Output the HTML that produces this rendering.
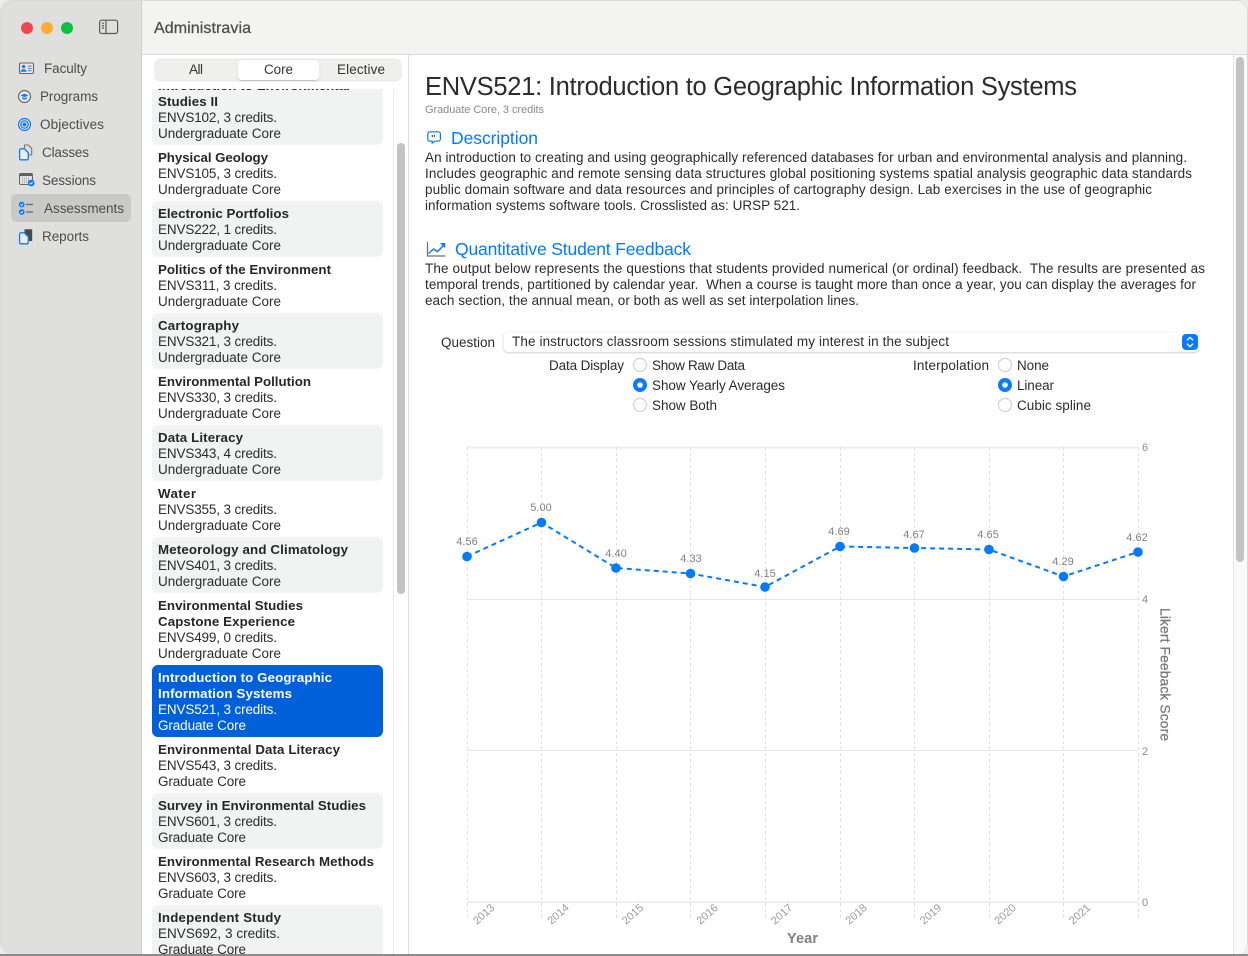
<!DOCTYPE html>
<html lang="en"><head><meta charset="utf-8"><title>Administravia</title>
<style>
html,body{margin:0;padding:0;width:1248px;height:956px;overflow:hidden;background:#ececec}
svg{display:block}
text{font-family:"Liberation Sans",sans-serif;font-size:13.5px;fill:#2c2c2c;white-space:pre}
.b{font-weight:bold;fill:#262626;font-size:13.3px}
.w{fill:#fff}
.n{fill:#4d4d4d}
.l{font-size:11px;fill:#8a8a8a}
.p{font-size:11px;fill:#808080}
.y{font-size:11px;fill:#999}
.h{font-size:17.5px;fill:#007aff}
.seg{fill:#333}
</style></head><body>
<svg width="1248" height="956" viewBox="0 0 1248 956" xmlns="http://www.w3.org/2000/svg">
<defs>
<clipPath id="win"><rect x="1" y="1" width="1246" height="953" rx="10"/></clipPath>
<clipPath id="list"><rect x="142" y="89" width="251" height="865"/></clipPath>
<filter id="sh" x="-5%" y="-30%" width="110%" height="170%"><feDropShadow dx="0" dy="0.6" stdDeviation="0.7" flood-color="#000" flood-opacity=".3"/></filter>
</defs>

<rect x="0" y="954" width="1248" height="2" fill="#8b8b8b"/>
<rect x="0.5" y="0.5" width="1247" height="953.5" rx="10.5" fill="#c4c4c4"/>
<g clip-path="url(#win)">
<rect x="1" y="1" width="1246" height="953" fill="#fff"/>
<rect x="1" y="1" width="140" height="953" fill="#dfdfde"/>
<rect x="141" y="1" width="1" height="953" fill="#cfcfcf"/>
<rect x="142" y="1" width="1105" height="53" fill="#f3f3f2"/>
<rect x="142" y="54" width="1105" height="1" fill="#d9d9d9"/>

<!-- Toolbar -->
<circle cx="27" cy="28" r="6" fill="#f4474d"/>
<circle cx="47" cy="28" r="6" fill="#fdab35"/>
<circle cx="67" cy="28" r="6" fill="#0cc040"/>
<g fill="none" stroke="#5a5a5a" stroke-width="1.2">
<rect x="99.6" y="20.2" width="18" height="13.3" rx="2.2"/>
<path d="M106 20.2v13.3"/>
<path d="M101.8 23.2h2.2M101.8 25.6h2.2M101.8 28h2.2"/>
</g>
<text x="154" y="33" textLength="97" class="n" style="font-size:16px;stroke:#4d4d4d;stroke-width:.25">Administravia</text>

<!-- Sidebar -->
<rect x="11" y="194" width="120" height="28" rx="5" fill="#c9c9c8"/>
<text x="44" y="73" textLength="43" class="n">Faculty</text>
<text x="40" y="101" textLength="58" class="n">Programs</text>
<text x="40" y="129" textLength="64" class="n">Objectives</text>
<text x="42" y="157" textLength="47" class="n">Classes</text>
<text x="42" y="185" textLength="54" class="n">Sessions</text>
<text x="44" y="213" textLength="80" class="n">Assessments</text>
<text x="42" y="241" textLength="47" class="n">Reports</text>

<!-- Faculty icon -->
<rect x="19.5" y="63" width="14" height="10.5" rx="1.5" fill="#e9e9e9" stroke="#666" stroke-width="1.1"/>
<circle cx="23.6" cy="66.6" r="1.7" fill="#0a7aff"/>
<path d="M20.6 71.8c0-3.4 6-3.4 6 0z" fill="#0a7aff"/>
<path d="M27.8 66h3.8M27.8 68.4h3.8M27.8 70.8h3.8" stroke="#4b7fb8" stroke-width="1"/>
<!-- Programs icon -->
<circle cx="24.5" cy="96.5" r="6" fill="#e9e9e9" stroke="#666" stroke-width="1.2"/>
<path d="M20.5 95.4l4-1.7 4 1.7-4 1.8z" fill="#0a7aff"/>
<path d="M22.2 97.1v1.6q2.3 1.5 4.6 0v-1.6l-2.3 1.1z" fill="#0a7aff"/>
<!-- Objectives icon -->
<g fill="none" stroke="#0a7aff" stroke-width="1.2"><circle cx="24.5" cy="124.5" r="6"/><circle cx="24.5" cy="124.5" r="3.7"/></g>
<circle cx="24.5" cy="124.5" r="1.9" fill="#0a7aff"/>
<!-- Classes icon -->
<path d="M24.5 148v-3h3.8l3.4 3.4v6.6h-3" fill="none" stroke="#777" stroke-width="1.1"/>
<path d="M19.6 150.3a1.5 1.5 0 0 1 1.5-1.5h3.2l4 4v5.5a1.5 1.5 0 0 1-1.5 1.5h-5.7a1.5 1.5 0 0 1-1.5-1.5z" fill="#eaf0f8" stroke="#0a7aff" stroke-width="1.3"/>
<!-- Sessions icon -->
<rect x="19.5" y="173.5" width="13" height="11" rx="1.5" fill="#e5e5e5" stroke="#666"/>
<rect x="19.5" y="173.5" width="13" height="2.6" fill="#5f5f5f"/>
<path d="M22 178.2h8M22 180.3h8M22 182.4h5" stroke="#8d8d8d" stroke-dasharray="1 1"/>
<circle cx="31.2" cy="183" r="3.4" fill="#0a7aff"/>
<path d="M29.7 183l1.1 1.1 1.9-2.2" fill="none" stroke="#fff" stroke-width=".9"/>
<!-- Assessments icon -->
<circle cx="21.7" cy="204.5" r="2.9" fill="#0a7aff"/><circle cx="21.7" cy="212" r="2.9" fill="#0a7aff"/>
<path d="M20.4 204.5l1 1 1.6-1.9M20.4 212l1 1 1.6-1.9" fill="none" stroke="#fff" stroke-width=".8"/>
<path d="M26 204.5h7M26 212h7" stroke="#666" stroke-width="1.3"/>
<!-- Reports icon -->
<path d="M24.5 232.5v-3.3h7a.7.7 0 0 1 .7.7v11.1h-3.2z" fill="#4a4a4a"/>
<path d="M19.6 234.3a1.5 1.5 0 0 1 1.5-1.5h3.2l4 4v5.5a1.5 1.5 0 0 1-1.5 1.5h-5.7a1.5 1.5 0 0 1-1.5-1.5z" fill="#eaf0f8" stroke="#0a7aff" stroke-width="1.3"/>

<!-- Segmented control -->
<rect x="155" y="59" width="246" height="22" rx="5.5" fill="#efefee" stroke="#e9e9e9"/>
<rect x="237.5" y="60" width="82" height="20" rx="4.5" fill="#fff" filter="url(#sh)"/>
<text x="189" y="74" textLength="14" class="seg">All</text>
<text x="264" y="74" textLength="29" class="seg">Core</text>
<text x="337" y="74" textLength="48" class="seg">Elective</text>

<!-- List -->
<rect x="393" y="89" width="1" height="865" fill="#ebebeb"/>
<rect x="408" y="55" width="1" height="899" fill="#e0e0e0"/>
<rect x="397" y="143" width="8" height="451" rx="4" fill="#c3c3c3"/>
<g clip-path="url(#list)">
<rect x="152" y="70" width="231" height="75" rx="6" fill="#f1f2f2"/>
<rect x="152" y="201" width="231" height="56" rx="6" fill="#f1f2f2"/>
<rect x="152" y="313" width="231" height="56" rx="6" fill="#f1f2f2"/>
<rect x="152" y="425" width="231" height="56" rx="6" fill="#f1f2f2"/>
<rect x="152" y="537" width="231" height="56" rx="6" fill="#f1f2f2"/>
<rect x="152" y="665" width="231" height="72" rx="6" fill="#0060d9"/>
<rect x="152" y="793" width="231" height="56" rx="6" fill="#f1f2f2"/>
<rect x="152" y="905" width="231" height="70" rx="6" fill="#f1f2f2"/>

<text x="158" y="90" textLength="192" class="b">Introduction to Environmental</text>
<text x="158" y="106" textLength="60" class="b">Studies II</text>
<text x="158" y="122" textLength="119">ENVS102, 3 credits.</text>
<text x="158" y="138" textLength="123">Undergraduate Core</text>

<text x="158" y="162" textLength="110" class="b">Physical Geology</text>
<text x="158" y="178" textLength="119">ENVS105, 3 credits.</text>
<text x="158" y="194" textLength="123">Undergraduate Core</text>

<text x="158" y="218" textLength="131" class="b">Electronic Portfolios</text>
<text x="158" y="234" textLength="119">ENVS222, 1 credits.</text>
<text x="158" y="250" textLength="123">Undergraduate Core</text>

<text x="158" y="274" textLength="173" class="b">Politics of the Environment</text>
<text x="158" y="290" textLength="119">ENVS311, 3 credits.</text>
<text x="158" y="306" textLength="123">Undergraduate Core</text>

<text x="158" y="330" textLength="81" class="b">Cartography</text>
<text x="158" y="346" textLength="119">ENVS321, 3 credits.</text>
<text x="158" y="362" textLength="123">Undergraduate Core</text>

<text x="158" y="386" textLength="153" class="b">Environmental Pollution</text>
<text x="158" y="402" textLength="119">ENVS330, 3 credits.</text>
<text x="158" y="418" textLength="123">Undergraduate Core</text>

<text x="158" y="442" textLength="85" class="b">Data Literacy</text>
<text x="158" y="458" textLength="119">ENVS343, 4 credits.</text>
<text x="158" y="474" textLength="123">Undergraduate Core</text>

<text x="158" y="498" textLength="38" class="b">Water</text>
<text x="158" y="514" textLength="119">ENVS355, 3 credits.</text>
<text x="158" y="530" textLength="123">Undergraduate Core</text>

<text x="158" y="554" textLength="190" class="b">Meteorology and Climatology</text>
<text x="158" y="570" textLength="119">ENVS401, 3 credits.</text>
<text x="158" y="586" textLength="123">Undergraduate Core</text>

<text x="158" y="610" textLength="145" class="b">Environmental Studies</text>
<text x="158" y="626" textLength="137" class="b">Capstone Experience</text>
<text x="158" y="642" textLength="119">ENVS499, 0 credits.</text>
<text x="158" y="658" textLength="123">Undergraduate Core</text>

<text x="158" y="682" textLength="174" class="b w">Introduction to Geographic</text>
<text x="158" y="698" textLength="134" class="b w">Information Systems</text>
<text x="158" y="714" textLength="119" class="w">ENVS521, 3 credits.</text>
<text x="158" y="730" textLength="88" class="w">Graduate Core</text>

<text x="158" y="754" textLength="182" class="b">Environmental Data Literacy</text>
<text x="158" y="770" textLength="119">ENVS543, 3 credits.</text>
<text x="158" y="786" textLength="88">Graduate Core</text>

<text x="158" y="810" textLength="208" class="b">Survey in Environmental Studies</text>
<text x="158" y="826" textLength="119">ENVS601, 3 credits.</text>
<text x="158" y="842" textLength="88">Graduate Core</text>

<text x="158" y="866" textLength="216" class="b">Environmental Research Methods</text>
<text x="158" y="882" textLength="119">ENVS603, 3 credits.</text>
<text x="158" y="898" textLength="88">Graduate Core</text>

<text x="158" y="922" textLength="123" class="b">Independent Study</text>
<text x="158" y="938" textLength="122">ENVS692, 3 credits.</text>
<text x="158" y="954" textLength="88">Graduate Core</text>
</g>

<!-- Main scrollbar -->
<rect x="1233" y="55" width="14" height="899" fill="#fafafa"/>
<rect x="1233" y="55" width="1" height="899" fill="#e6e6e6"/>
<rect x="1236" y="57" width="8" height="505" rx="4" fill="#c3c3c3"/>

<!-- Header -->
<text x="425" y="95" textLength="652" style="font-size:25.5px" fill="#2a2a2a">ENVS521: Introduction to Geographic Information Systems</text>
<text x="425" y="113" textLength="119" style="font-size:11px;fill:#8a8a8a">Graduate Core, 3 credits</text>

<!-- Description -->
<path d="M430 131.8h8.2a2.2 2.2 0 0 1 2.2 2.2v5a2.2 2.2 0 0 1-2.2 2.2h-3.4l-2.6 2v-2h-2.2a2.2 2.2 0 0 1-2.2-2.2v-5a2.2 2.2 0 0 1 2.2-2.2z" fill="none" stroke="#0a7aff" stroke-width="1.2"/>
<path d="M432.4 135v2M434.4 135v2" stroke="#555" stroke-width="1.2"/>
<text x="451" y="144" textLength="87" class="h">Description</text>
<text x="425" y="162" textLength="762">An introduction to creating and using geographically referenced databases for urban and environmental analysis and planning.</text>
<text x="425" y="178" textLength="767">Includes geographic and remote sensing data structures global positioning systems spatial analysis geographic data standards</text>
<text x="425" y="194" textLength="727">public domain software and data resources and principles of cartography design. Lab exercises in the use of geographic</text>
<text x="425" y="210" textLength="375">information systems software tools. Crosslisted as: URSP 521.</text>

<!-- Quantitative -->
<path d="M427.5 242v14h18" fill="none" stroke="#6e6e6e" stroke-width="1.2"/>
<path d="M428.5 253.5l5-4.5 4 2.5 6.5-6.5" fill="none" stroke="#0a7aff" stroke-width="1.5"/>
<path d="M440 243h5.2v5.2z" fill="#0a7aff"/>
<text x="455" y="255" textLength="236" class="h">Quantitative Student Feedback</text>
<text x="425" y="273" textLength="780">The output below represents the questions that students provided numerical (or ordinal) feedback.  The results are presented as</text>
<text x="425" y="289" textLength="771">temporal trends, partitioned by calendar year.  When a course is taught more than once a year, you can display the averages for</text>
<text x="425" y="305" textLength="434">each section, the annual mean, or both as well as set interpolation lines.</text>

<!-- Controls -->
<text x="441" y="347" textLength="54">Question</text>
<rect x="503.5" y="332" width="695" height="20" rx="5" fill="#fff" stroke="#efefef" stroke-width=".6" filter="url(#sh)"/>
<text x="512" y="346" textLength="437">The instructors classroom sessions stimulated my interest in the subject</text>
<rect x="1182" y="334" width="16" height="16" rx="4" fill="#0a7aff"/>
<path d="M1187 340.3l3-3 3 3M1187 343.7l3 3 3-3" fill="none" stroke="#fff" stroke-width="1.3"/>

<text x="549" y="370" textLength="75">Data Display</text>
<circle cx="640" cy="365" r="6.5" fill="#fff" stroke="#c9c9c9"/>
<circle cx="640" cy="385" r="7" fill="#0a7aff"/><circle cx="640" cy="385" r="2.8" fill="#fff"/>
<circle cx="640" cy="405" r="6.5" fill="#fff" stroke="#c9c9c9"/>
<text x="652" y="370" textLength="93">Show Raw Data</text>
<text x="652" y="390" textLength="133">Show Yearly Averages</text>
<text x="652" y="410" textLength="65">Show Both</text>

<text x="913" y="370" textLength="76">Interpolation</text>
<circle cx="1005" cy="365" r="6.5" fill="#fff" stroke="#c9c9c9"/>
<circle cx="1005" cy="385" r="7" fill="#0a7aff"/><circle cx="1005" cy="385" r="2.8" fill="#fff"/>
<circle cx="1005" cy="405" r="6.5" fill="#fff" stroke="#c9c9c9"/>
<text x="1017" y="370" textLength="32">None</text>
<text x="1017" y="390" textLength="37">Linear</text>
<text x="1017" y="410" textLength="74">Cubic spline</text>

<!-- Chart grid -->
<path d="M467 599.5H1138M467 750.5H1138" fill="none" stroke="#e6e6e6"/>
<rect x="467" y="446.5" width="671" height="2" fill="#eeeeee"/>
<rect x="467" y="901" width="671" height="2" fill="#eeeeee"/>
<g stroke="#dedede" stroke-width="1" stroke-dasharray="3 3" fill="none">
<path d="M467.5 447V918M541.5 447V918M616.5 447V918M690.5 447V918M765.5 447V918M840.5 447V918M914.5 447V918M989.5 447V918M1063.5 447V918M1138.5 447V918"/>
</g>
<text x="1142" y="451" class="l">6</text>
<text x="1142" y="603" class="l">4</text>
<text x="1142" y="755" class="l">2</text>
<text x="1142" y="906" class="l">0</text>

<!-- Chart data -->
<polyline points="467,556.5 541.5,522.5 616,568 690.5,573.5 765,587 840,546.5 914.5,548 989,549.5 1063.5,576.5 1138,552" fill="none" stroke="#007aff" stroke-width="2" stroke-dasharray="5 4"/>
<g fill="#007aff">
<circle cx="467" cy="556.5" r="4.8"/><circle cx="541.5" cy="522.5" r="4.8"/><circle cx="616" cy="568" r="4.8"/><circle cx="690.5" cy="573.5" r="4.8"/><circle cx="765" cy="587" r="4.8"/><circle cx="840" cy="546.5" r="4.8"/><circle cx="914.5" cy="548" r="4.8"/><circle cx="989" cy="549.5" r="4.8"/><circle cx="1063.5" cy="576.5" r="4.8"/><circle cx="1138" cy="552" r="4.8"/>
</g>
<g text-anchor="middle">
<text x="467" y="545" class="p">4.56</text>
<text x="541" y="511" class="p">5.00</text>
<text x="616" y="557" class="p">4.40</text>
<text x="691" y="562" class="p">4.33</text>
<text x="765" y="577" class="p">4.15</text>
<text x="839" y="535" class="p">4.69</text>
<text x="914" y="538" class="p">4.67</text>
<text x="988" y="538" class="p">4.65</text>
<text x="1063" y="565" class="p">4.29</text>
<text x="1137" y="541" class="p">4.62</text>
</g>
<g>
<text class="y" transform="translate(477 925) rotate(-42)">2013</text>
<text class="y" transform="translate(551.5 925) rotate(-42)">2014</text>
<text class="y" transform="translate(626 925) rotate(-42)">2015</text>
<text class="y" transform="translate(700.5 925) rotate(-42)">2016</text>
<text class="y" transform="translate(775 925) rotate(-42)">2017</text>
<text class="y" transform="translate(849.5 925) rotate(-42)">2018</text>
<text class="y" transform="translate(924 925) rotate(-42)">2019</text>
<text class="y" transform="translate(998.5 925) rotate(-42)">2020</text>
<text class="y" transform="translate(1073 925) rotate(-42)">2021</text>
</g>
<text x="787" y="943" textLength="31" style="font-size:14.5px;font-weight:bold;fill:#808080">Year</text>
<text transform="translate(1160.5 608) rotate(90)" textLength="133" style="font-size:13.8px;fill:#777;stroke:#777;stroke-width:.25">Likert Feeback Score</text>
</g>
</svg>
</body></html>
